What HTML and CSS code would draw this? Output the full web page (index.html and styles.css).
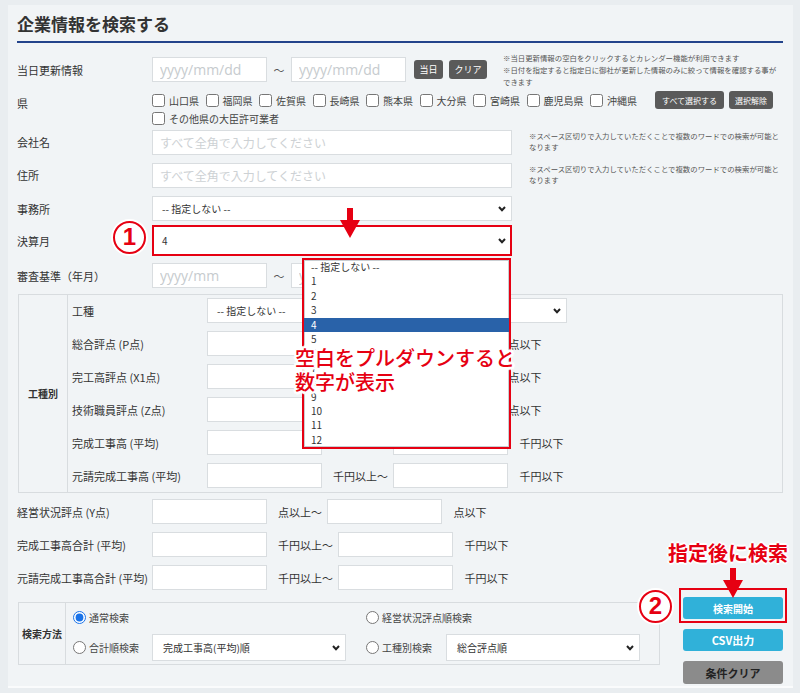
FILE: index.html
```html
<!DOCTYPE html>
<html lang="ja">
<head>
<meta charset="utf-8">
<title>企業情報を検索する</title>
<link rel="stylesheet" href="styles.css">
</head>
<body>
<div class="panel">
  <h1 class="title">企業情報を検索する</h1>
  <div class="form">
    <div class="row row-date">
      <div class="label">当日更新情報</div>
      <input class="inp inp-short inp-date" placeholder="yyyy/mm/dd">
      <span class="tilde">～</span>
      <input class="inp inp-short inp-date" placeholder="yyyy/mm/dd">
      <button class="btn-dark btn-today">当日</button>
      <button class="btn-dark btn-clear">クリア</button>
      <div class="note note-date">※当日更新情報の空白をクリックするとカレンダー機能が利用できます<br>※日付を指定すると指定日に御社が更新した情報のみに絞って情報を確認する事が<br>できます</div>
    </div>

    <div class="row row-pref">
      <div class="label label-pref">県</div>
      <div class="pref-list">
        <div class="pref-line">
          <label class="chk"><input type="checkbox"><span>山口県</span></label>
          <label class="chk"><input type="checkbox"><span>福岡県</span></label>
          <label class="chk"><input type="checkbox"><span>佐賀県</span></label>
          <label class="chk"><input type="checkbox"><span>長崎県</span></label>
          <label class="chk"><input type="checkbox"><span>熊本県</span></label>
          <label class="chk"><input type="checkbox"><span>大分県</span></label>
          <label class="chk"><input type="checkbox"><span>宮崎県</span></label>
          <label class="chk"><input type="checkbox"><span>鹿児島県</span></label>
          <label class="chk"><input type="checkbox"><span>沖縄県</span></label>
        </div>
        <div class="pref-line pref-line2">
          <label class="chk"><input type="checkbox"><span>その他県の大臣許可業者</span></label>
        </div>
      </div>
      <button class="btn-dark btn-all">すべて選択する</button>
      <button class="btn-dark btn-unsel">選択解除</button>
    </div>

    <div class="row row-text">
      <div class="label">会社名</div>
      <input class="inp inp-long inp-jp" placeholder="すべて全角で入力してください">
      <div class="note note-text">※スペース区切りで入力していただくことで複数のワードでの検索が可能と<br>なります</div>
    </div>

    <div class="row row-text">
      <div class="label">住所</div>
      <input class="inp inp-long inp-jp" placeholder="すべて全角で入力してください">
      <div class="note note-text">※スペース区切りで入力していただくことで複数のワードでの検索が可能と<br>なります</div>
    </div>

    <div class="row row-office">
      <div class="label">事務所</div>
      <div class="sel sel-long"><span>-- 指定しない --</span><svg class="chev" viewBox="0 0 8 6" width="8" height="6"><path d="M1 1 L4 4.2 L7 1" fill="none" stroke="#222" stroke-width="2"/></svg></div>
    </div>

    <div class="row row-month">
      <div class="label">決算月</div>
      <div class="sel sel-long sel-marked"><span>4</span><svg class="chev" viewBox="0 0 8 6" width="8" height="6"><path d="M1 1 L4 4.2 L7 1" fill="none" stroke="#222" stroke-width="2"/></svg></div>
    </div>

    <div class="row row-period">
      <div class="label">審査基準（年月）</div>
      <input class="inp inp-short inp-date" placeholder="yyyy/mm">
      <span class="tilde">～</span>
      <input class="inp inp-short inp-date" placeholder="yyyy/mm">
    </div>

    <div class="kshu">
      <div class="kshu-head">工種別</div>
      <div class="kshu-body">
        <div class="row">
          <div class="label">工種</div>
          <div class="sel sel-long"><span>-- 指定しない --</span><svg class="chev" viewBox="0 0 8 6" width="8" height="6"><path d="M1 1 L4 4.2 L7 1" fill="none" stroke="#222" stroke-width="2"/></svg></div>
        </div>
        <div class="row">
          <div class="label">総合評点 (P点)</div>
          <input class="inp inp-short"><span class="unit-from">点以上～</span><input class="inp inp-short"><span class="unit-to">点以下</span>
        </div>
        <div class="row">
          <div class="label">完工高評点 (X1点)</div>
          <input class="inp inp-short"><span class="unit-from">点以上～</span><input class="inp inp-short"><span class="unit-to">点以下</span>
        </div>
        <div class="row">
          <div class="label">技術職員評点 (Z点)</div>
          <input class="inp inp-short"><span class="unit-from">点以上～</span><input class="inp inp-short"><span class="unit-to">点以下</span>
        </div>
        <div class="row">
          <div class="label">完成工事高 (平均)</div>
          <input class="inp inp-short"><span class="unit-from">千円以上～</span><input class="inp inp-short"><span class="unit-to">千円以下</span>
        </div>
        <div class="row row-last">
          <div class="label">元請完成工事高 (平均)</div>
          <input class="inp inp-short"><span class="unit-from">千円以上～</span><input class="inp inp-short"><span class="unit-to">千円以下</span>
        </div>
      </div>
    </div>

    <div class="row">
      <div class="label">経営状況評点 (Y点)</div>
      <input class="inp inp-short"><span class="unit-from">点以上～</span><input class="inp inp-short"><span class="unit-to">点以下</span>
    </div>
    <div class="row">
      <div class="label">完成工事高合計 (平均)</div>
      <input class="inp inp-short"><span class="unit-from">千円以上～</span><input class="inp inp-short"><span class="unit-to">千円以下</span>
    </div>
    <div class="row">
      <div class="label">元請完成工事高合計 (平均)</div>
      <input class="inp inp-short"><span class="unit-from">千円以上～</span><input class="inp inp-short"><span class="unit-to">千円以下</span>
    </div>

    <div class="bottom">
      <div class="method">
        <div class="method-head">検索方法</div>
        <div class="method-body">
          <label class="rad rad-normal"><input type="radio" name="m" checked><span>通常検索</span></label>
          <label class="rad rad-keiei"><input type="radio" name="m"><span>経営状況評点順検索</span></label>
          <label class="rad"><input type="radio" name="m"><span>合計順検索</span></label>
          <div class="sel sel-method"><span>完成工事高(平均)順</span><svg class="chev" viewBox="0 0 8 6" width="8" height="6"><path d="M1 1 L4 4.2 L7 1" fill="none" stroke="#222" stroke-width="2"/></svg></div>
          <label class="rad rad-kshu"><input type="radio" name="m"><span>工種別検索</span></label>
          <div class="sel sel-method"><span>総合評点順</span><svg class="chev" viewBox="0 0 8 6" width="8" height="6"><path d="M1 1 L4 4.2 L7 1" fill="none" stroke="#222" stroke-width="2"/></svg></div>
        </div>
      </div>
      <div class="actions">
        <button class="btn-act btn-cyan">検索開始</button>
        <button class="btn-act btn-cyan">CSV出力</button>
        <button class="btn-act btn-gray">条件クリア</button>
      </div>
    </div>
  </div>
</div>

<!-- open dropdown of 決算月 -->
<div class="dropdown">
  <div class="opt">-- 指定しない --</div>
  <div class="opt">1</div>
  <div class="opt">2</div>
  <div class="opt">3</div>
  <div class="opt opt-sel">4</div>
  <div class="opt">5</div>
  <div class="opt">6</div>
  <div class="opt">7</div>
  <div class="opt">8</div>
  <div class="opt">9</div>
  <div class="opt">10</div>
  <div class="opt">11</div>
  <div class="opt">12</div>
</div>

<!-- annotations -->
<div class="circle circle-1">1</div>
<svg class="arrow arrow-1" viewBox="0 0 20 30" width="20" height="30"><path d="M7 0 H13 V12 H20 L10 30 L0 12 H7 Z" fill="#e60012"/></svg>
<div class="callout">空白をプルダウンすると<br>数字が表示</div>
<div class="callout-2">指定後に検索</div>
<svg class="arrow arrow-2" viewBox="0 0 20 30" width="20" height="30"><path d="M7 0 H13 V12 H20 L10 30 L0 12 H7 Z" fill="#e60012"/></svg>
<div class="mark-box"></div>
<div class="circle circle-2">2</div>
</body>
</html>
```

FILE: styles.css
```css
* { box-sizing: border-box; }
html, body { margin: 0; padding: 0; }
body {
  width: 800px;
  height: 693px;
  overflow: hidden;
  background: #e9edf0;
  font-family: "Noto Sans CJK JP", "Noto Sans", sans-serif;
  color: #333;
}
button { font-family: inherit; border: none; cursor: pointer; padding: 0; }

.panel {
  margin: 5px 7px 0 8px;
  padding: 7px 10px 0 9px;
  height: 683px;
  background: #f1f4f6;
  border-bottom: 2px solid #fafbfc;
}
.title {
  margin: 0;
  padding: 0 0 5px 0;
  font-size: 17px;
  line-height: 24px;
  font-weight: 700;
  color: #333;
  border-bottom: 2px solid #23438b;
}
.form { margin-top: 14px; }

.row { display: flex; align-items: center; margin-bottom: 8px; }
.label { width: 135px; flex: none; font-size: 11px; line-height: 16px; color: #333; white-space: nowrap; }

.inp {
  height: 25px;
  border: 1px solid #d9dde0;
  background: #fff;
  padding: 0 7px;
  font-family: "Open Sans", "Noto Sans CJK JP", sans-serif;
  font-size: 11px;
  color: #333;
  outline: none;
  flex: none;
}
.inp-short { width: 115px; }
.inp-long { width: 360px; }
.inp-date { font-size: 14px; }
.inp-date::placeholder { color: #c6cbce; }
.inp-jp { font-family: "Noto Sans CJK JP", sans-serif; font-size: 12px; }
.inp-jp::placeholder { color: #cdd1d4; }

.tilde { width: 24px; text-align: center; font-size: 11px; color: #555; flex: none; }

.btn-dark {
  background: #5a5a5a;
  color: #fff;
  border-radius: 3px;
  flex: none;
}
.btn-today { margin-left: 8px; width: 29px; height: 19px; font-size: 9px; }
.btn-clear { margin-left: 6px; width: 38px; height: 19px; font-size: 9px; }

.note { font-size: 7.4px; color: #555; white-space: nowrap; }
.row-date { height: 25px; }
.note-date { margin-left: 16px; line-height: 12px; }
.row-text { align-items: flex-start; }
.note-text { margin-left: 17px; line-height: 11px; margin-top: 0; }

/* prefecture row */
.row-pref { align-items: flex-start; margin-bottom: 4px; }
.label-pref { line-height: 26px; }
.pref-list { width: 503px; flex: none; }
.pref-line { display: flex; align-items: center; height: 20px; }
.pref-line2 { height: 16px; }
.chk { display: inline-flex; align-items: center; margin-right: 6.5px; font-size: 10px; color: #444; white-space: nowrap; }
.chk input { margin: 0 4px 0 0; width: 13px; height: 13px; }
.btn-all { margin-top: 1px; width: 69px; height: 18px; font-size: 8px; }
.btn-unsel { margin-top: 1px; margin-left: 5px; width: 44px; height: 18px; font-size: 8px; }

/* selects */
.sel {
  display: flex;
  align-items: center;
  justify-content: space-between;
  height: 25px;
  background: #fff;
  border: 1px solid #d9dde0;
  padding: 0 5px 0 9px;
  font-size: 10px;
  color: #333;
  flex: none;
}
.sel-long { width: 360px; }
.row-text .label { line-height: 25px; }
.row-office { margin-bottom: 4px; }
.row-month { margin-bottom: 7px; }
.sel-marked { height: 31px; border: 2px solid #e60012; padding-left: 8px; padding-right: 4px; }
.row-period { margin-bottom: 6px; }

.unit-from { margin: 0 4.5px 0 11px; font-size: 11px; color: #333; white-space: nowrap; flex: none; }
.unit-to { margin-left: 12px; font-size: 11px; color: #333; white-space: nowrap; flex: none; }

/* 工種別 box */
.kshu {
  display: flex;
  margin-left: 1px;
  margin-bottom: 6px;
  border: 1px solid #d8dcdf;
}
.kshu-head {
  width: 49px;
  flex: none;
  border-right: 1px solid #d8dcdf;
  display: flex;
  align-items: center;
  justify-content: center;
  font-size: 10px;
  font-weight: 700;
  color: #333;
}
.kshu-body { flex: 1; padding: 3px 0 4px 4px; }
.row-last { margin-bottom: 0; }

/* bottom area */
.bottom { display: flex; justify-content: space-between; align-items: flex-start; margin-top: -1px; }
.method {
  display: flex;
  width: 642px;
  margin-left: 1px;
  margin-top: 5px;
  border: 1px solid #d8dcdf;
}
.method-head {
  width: 47px;
  flex: none;
  border-right: 1px solid #d8dcdf;
  display: flex;
  align-items: center;
  justify-content: center;
  font-size: 10px;
  font-weight: 700;
  color: #333;
}
.method-body {
  display: grid;
  grid-template-columns: 79px 194px 20px 80px 194px;
  grid-template-rows: 24px 27px;
  row-gap: 5px;
  padding: 2px 0 3px 7px;
  align-items: center;
}
.rad { display: flex; align-items: center; font-size: 10px; color: #444; white-space: nowrap; }
.rad input { margin: 0 3px 0 0; width: 13px; height: 13px; accent-color: #1a73e8; }
.rad-normal { grid-column: 1 / 3; }
.rad-keiei { grid-column: 4 / 6; }
.rad-kshu { grid-column: 4; }
.sel-method { height: 27px; width: 194px; padding-left: 10px; }

.actions { width: 100px; display: flex; flex-direction: column; gap: 10px; }
.btn-act { height: 22px; width: 100px; border-radius: 3px; font-size: 10px; font-weight: 700; }
.btn-cyan { background: #30b1d9; color: #fff; }
.btn-gray { background: #8b8b8b; color: #222; height: 23px; font-size: 11px; }
.btn-cyan + .btn-cyan { font-size: 11px; }

/* open dropdown overlay */
.dropdown {
  position: absolute;
  left: 302px;
  top: 258px;
  width: 209px;
  border: 2px solid #e60012;
  background: #fff;
  box-shadow: inset 0 0 0 1px #c9ced2;
}
.opt { font-size: 10px; line-height: 14.4px; height: 14.4px; padding-left: 7px; color: #333; }
.opt-sel { background: #2962a9; color: #fff; }

/* annotations */
.circle {
  position: absolute;
  width: 33px;
  height: 33px;
  border: 2.5px solid #e60012;
  border-radius: 50%;
  box-shadow: 0 0 0 2px #fff, inset 0 0 0 2px #fff;
  background: #fff;
  color: #e60012;
  font-family: "Liberation Sans", sans-serif;
  font-weight: 700;
  font-size: 24px;
  line-height: 28px;
  text-align: center;
}
.circle-1 { left: 113px; top: 221px; }
.circle-2 { left: 639px; top: 590px; }

.arrow { position: absolute; }
.arrow-1 { left: 340px; top: 208px; }
.arrow-2 { left: 723px; top: 568px; }

.callout {
  position: absolute;
  left: 295px;
  top: 346px;
  font-size: 20px;
  line-height: 24px;
  font-weight: 500;
  color: #e60012;
  white-space: nowrap;
  text-shadow:
    2px 0 0 #fff, -2px 0 0 #fff, 0 2px 0 #fff, 0 -2px 0 #fff,
    2px 2px 0 #fff, -2px -2px 0 #fff, 2px -2px 0 #fff, -2px 2px 0 #fff,
    3px 0 1px #fff, -3px 0 1px #fff, 0 3px 1px #fff, 0 -3px 1px #fff;
}
.callout-2 {
  position: absolute;
  left: 668px;
  top: 541px;
  font-size: 20px;
  line-height: 24px;
  font-weight: 700;
  color: #e60012;
  white-space: nowrap;
  text-shadow: 2px 0 0 #fff, -2px 0 0 #fff, 0 2px 0 #fff, 0 -2px 0 #fff;
}
.mark-box {
  position: absolute;
  left: 679px;
  top: 588px;
  width: 108px;
  height: 35px;
  border: 2px solid #e60012;
}
```
